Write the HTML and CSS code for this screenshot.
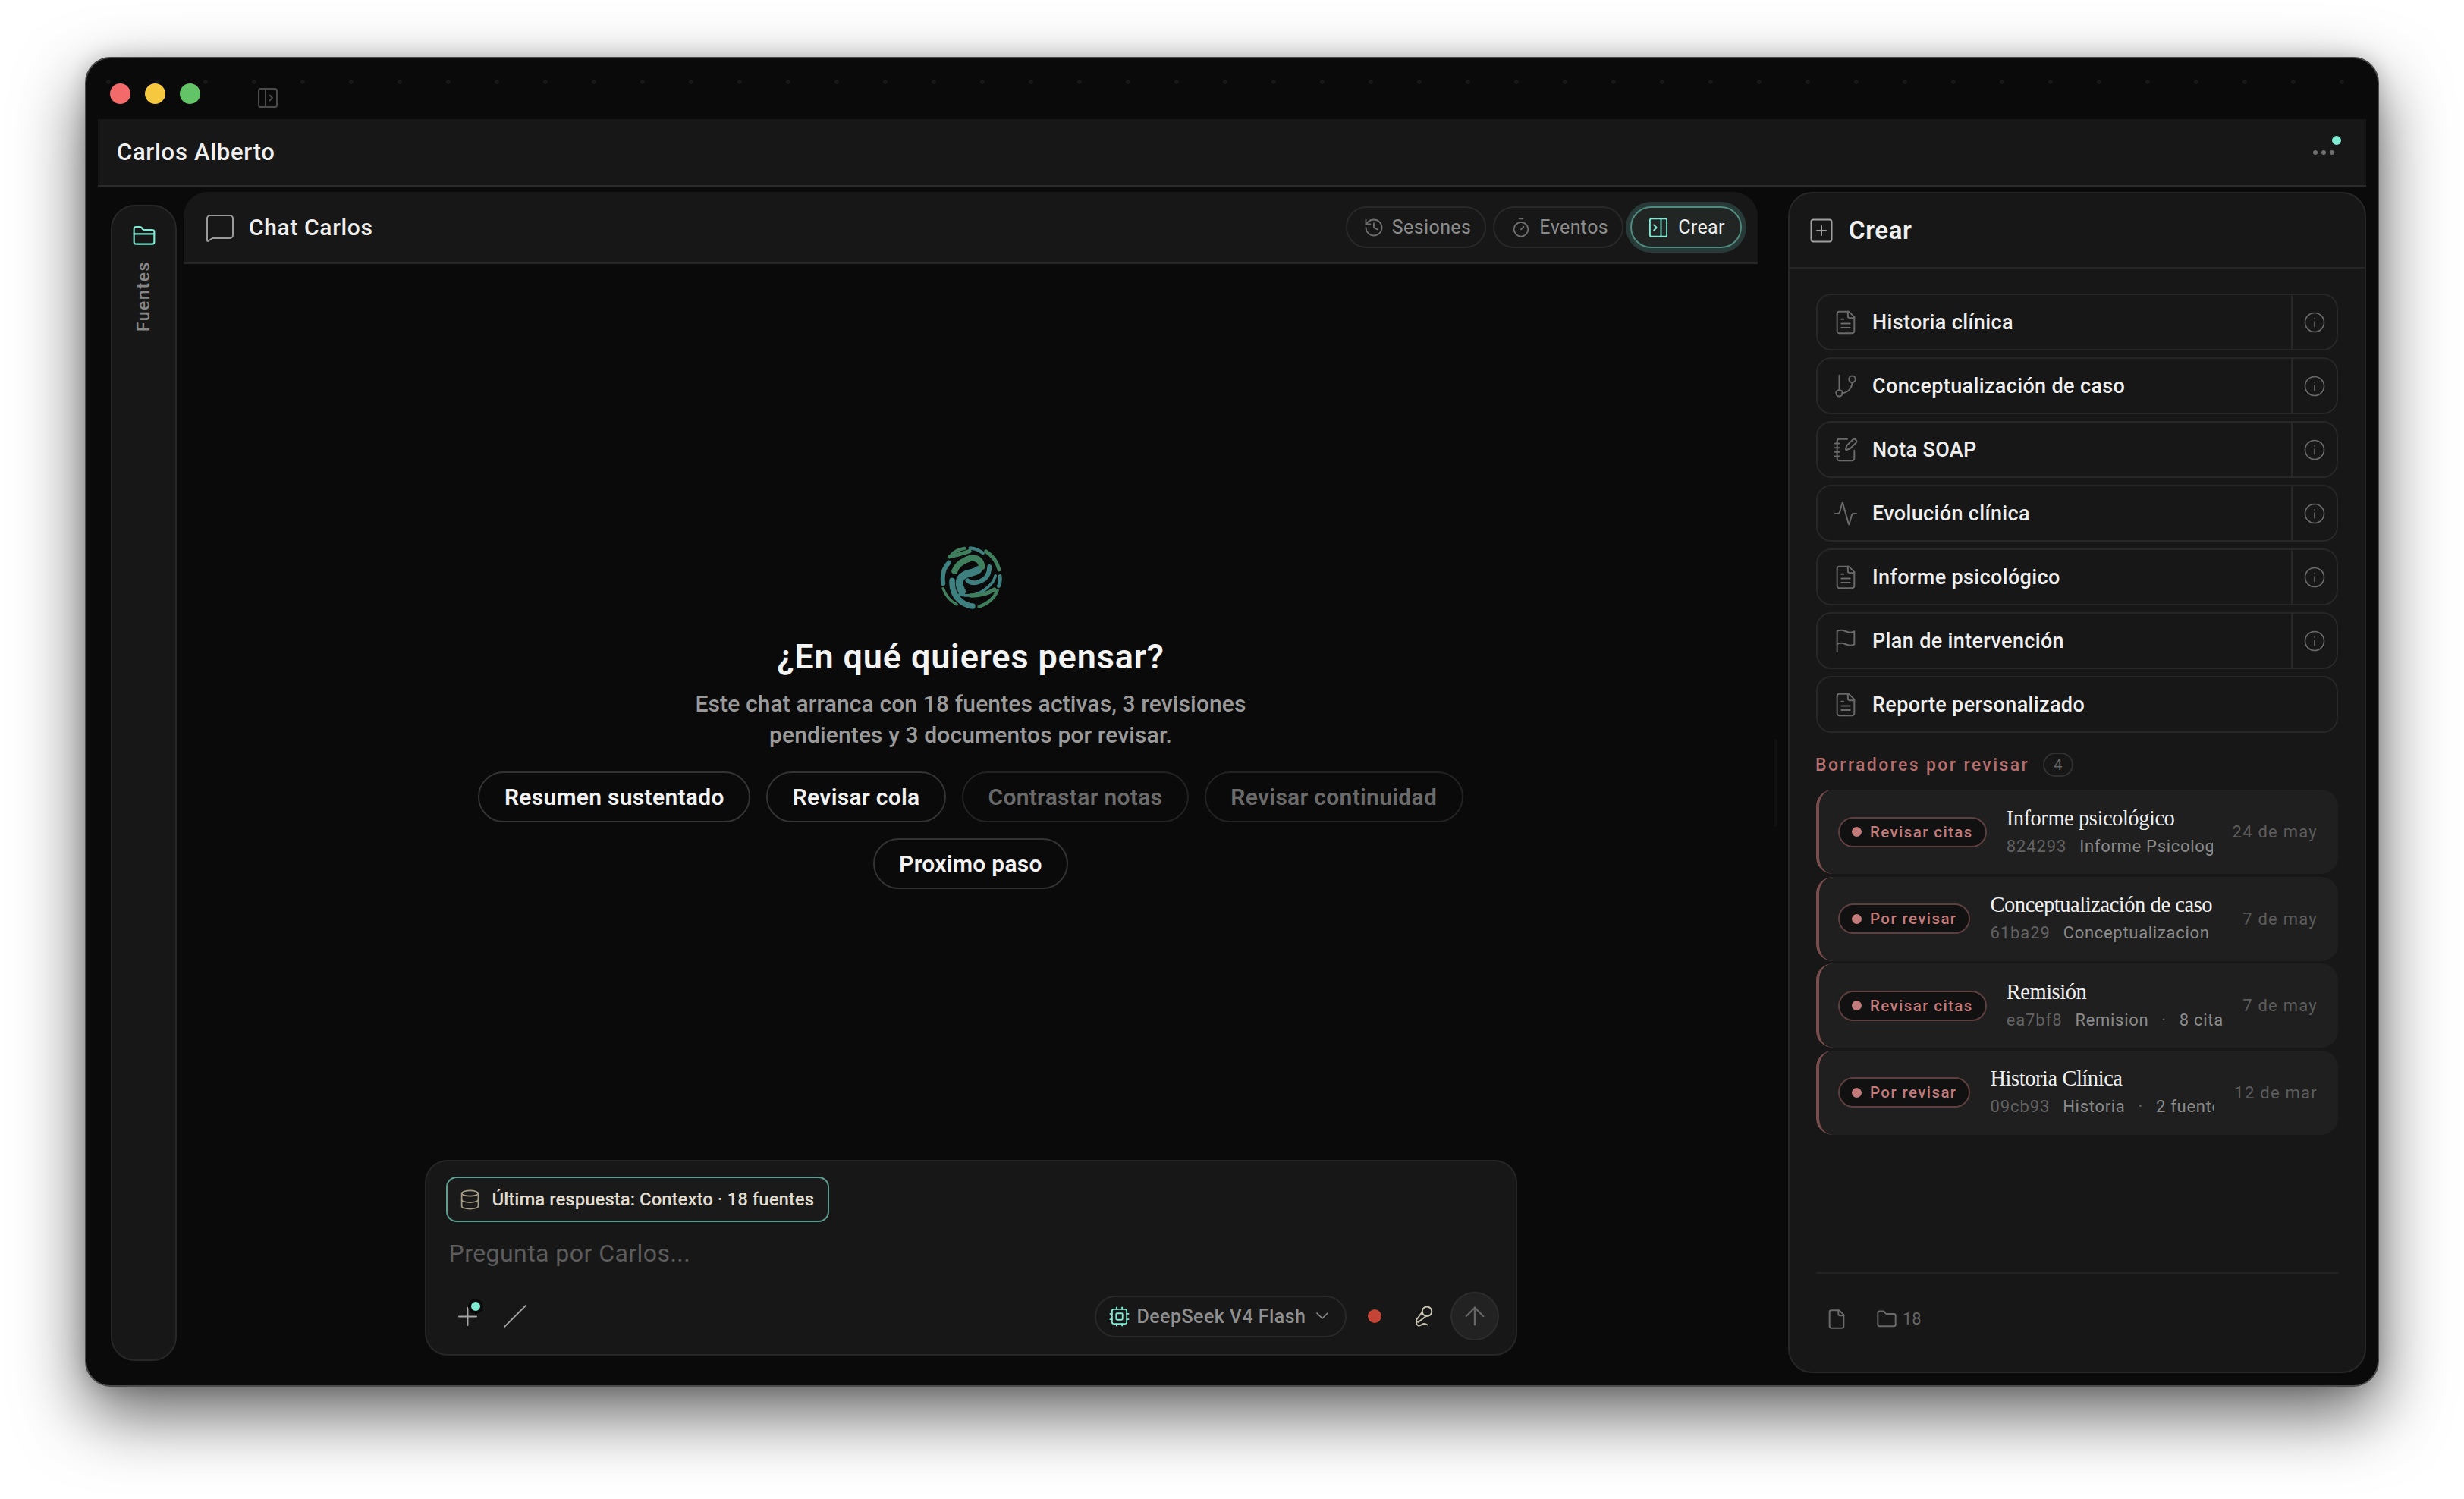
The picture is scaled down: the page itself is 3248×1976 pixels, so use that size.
FILE: index.html
```html
<!DOCTYPE html>
<html lang="es">
<head>
<meta charset="utf-8">
<title>Chat Carlos</title>
<link rel="stylesheet" href="styles.css">
</head>
<body>
<svg class="defs" width="0" height="0" aria-hidden="true">
  <defs>
    <symbol id="i-file-text" viewBox="0 0 24 24"><path d="M15 2H6a2 2 0 0 0-2 2v16a2 2 0 0 0 2 2h12a2 2 0 0 0 2-2V7Z"/><path d="M14 2v4a2 2 0 0 0 2 2h4"/><path d="M16 13H8"/><path d="M16 17H8"/><path d="M10 9H8"/></symbol>
    <symbol id="i-branch" viewBox="0 0 24 24"><path d="M6 2v13"/><circle cx="18" cy="5.500" r="3"/><circle cx="6" cy="18.500" r="3"/><path d="M18 8.500a10 10 0 0 1-9.500 10"/></symbol>
    <symbol id="i-note" viewBox="0 0 24 24"><path d="M13.400 2H6a2 2 0 0 0-2 2v16a2 2 0 0 0 2 2h12a2 2 0 0 0 2-2v-7.400"/><path d="M2 6h4"/><path d="M2 10h4"/><path d="M2 14h4"/><path d="M2 18h4"/><path d="M21.378 5.626a1 1 0 1 0-3.004-3.004l-5.010 5.012a2 2 0 0 0-.506.854l-.837 2.870a.5.5 0 0 0 .62.62l2.870-.837a2 2 0 0 0 .854-.506z"/></symbol>
    <symbol id="i-activity" viewBox="0 0 24 24"><path d="M22 12h-2.480a2 2 0 0 0-1.930 1.460l-2.350 8.360a.25.25 0 0 1-.48 0L9.240 2.180a.25.25 0 0 0-.48 0l-2.350 8.360A2 2 0 0 1 4.490 12H2"/></symbol>
    <symbol id="i-flag" viewBox="0 0 24 24"><path d="M4 15s1-1 4-1 5 2 8 2 4-1 4-1V3s-1 1-4 1-5-2-8-2-4 1-4 1z"/><path d="M4 22v-7"/></symbol>
    <symbol id="i-info" viewBox="0 0 24 24"><circle cx="12" cy="12" r="10"/><path d="M12 16.500v-5"/><path d="M12 7.800v.1"/></symbol>
  </defs>
</svg>

<div class="window">
  <div class="titlebar">
    <span class="light light-red"></span>
    <span class="light light-yellow"></span>
    <span class="light light-green"></span>
    <svg class="sidebar-toggle" viewBox="0 0 26 26"><rect x="1" y="1" width="24" height="24" rx="2.500"/><path d="M10 1v24"/><path d="M15.500 9.500l3.500 3.500-3.500 3.500"/></svg>
  </div>

  <header class="top-header">
    <span class="person">Carlos Alberto</span>
    <span class="more">
      <i></i><i></i><i></i>
      <b class="more-dot"></b>
    </span>
  </header>

  <div class="workspace">
    <aside class="rail">
      <svg class="rail-icon" viewBox="0 0 24 24"><path d="M20 20a2 2 0 0 0 2-2V8a2 2 0 0 0-2-2h-7.900a2 2 0 0 1-1.690-.9L9.600 3.900A2 2 0 0 0 7.930 3H4a2 2 0 0 0-2 2v13a2 2 0 0 0 2 2Z"/><path d="M2 10h20"/></svg>
      <span class="rail-label">Fuentes</span>
    </aside>

    <main class="chat">
      <div class="chat-head">
        <svg class="chat-icon" viewBox="0 0 36 36"><path d="M5 1h26a4 4 0 0 1 4 4v22a4 4 0 0 1-4 4H8l-6 4a1 1 0 0 1-1-1V5a4 4 0 0 1 4-4z"/></svg>
        <span class="chat-title">Chat Carlos</span>
        <div class="head-actions">
          <button class="head-btn">
            <svg viewBox="0 0 24 24"><path d="M3 12a9 9 0 1 0 9-9 9.750 9.750 0 0 0-6.740 2.740L3 8"/><path d="M3 3v5h5"/><path d="M12 7v5l4 2"/></svg>
            <span>Sesiones</span>
          </button>
          <button class="head-btn">
            <svg viewBox="0 0 24 24"><path d="M10 2h4"/><path d="M12 14l3-3"/><circle cx="12" cy="14" r="8"/></svg>
            <span>Eventos</span>
          </button>
          <button class="head-btn head-btn-active">
            <svg viewBox="0 0 24 24"><rect x="2.500" y="2" width="19" height="20" rx="1.500"/><path d="M15 2v20"/><path d="M7 9l3 3-3 3"/></svg>
            <span>Crear</span>
          </button>
        </div>
      </div>

      <div class="chat-body">
        <svg class="logo" viewBox="170 88 256 256">
          <g class="logo-t">
            <path stroke-width="13" d="M294 95Q325 98 346 116"/>
            <path stroke-width="15" d="M414 208Q417 230 409 248"/>
            <path stroke-width="23" d="M222 226Q220 285 262 313Q285 328 304 329"/>
            <path stroke-width="18" d="M209 154Q178 185 186 238"/>
            <path stroke-width="30" d="M262 270Q232 215 285 198Q318 192 328 182"/>
            <path stroke-width="18" d="M372 170Q372 222 320 234Q298 238 284 226"/>
            <path stroke-width="11" d="M252 282Q330 300 385 232Q393 218 396 206"/>
          </g>
          <g class="logo-g">
            <path stroke-width="15" d="M358 109Q398 135 411 182"/>
            <path stroke-width="13" d="M404 266Q385 312 330 331"/>
            <path stroke-width="11" d="M186 258Q200 300 240 322"/>
            <path stroke-width="13" d="M272 97Q240 102 220 122"/>
            <path stroke-width="25" d="M232 188Q245 152 296 136Q336 132 342 170"/>
            <path stroke-width="16" d="M296 286Q350 288 392 262"/>
            <path stroke-width="16" d="M212 130Q250 122 292 108"/>
          </g>
        </svg>
        <h1 class="hero-title">¿En qué quieres pensar?</h1>
        <p class="hero-sub">Este chat arranca con 18 fuentes activas, 3 revisiones<br>pendientes y 3 documentos por revisar.</p>
        <div class="chips">
          <button class="chip">Resumen sustentado</button>
          <button class="chip">Revisar cola</button>
          <button class="chip chip-off">Contrastar notas</button>
          <button class="chip chip-off">Revisar continuidad</button>
          <button class="chip">Proximo paso</button>
        </div>

        <div class="composer">
          <div class="context">
            <svg viewBox="0 0 24 24"><ellipse cx="12" cy="5" rx="9" ry="3"/><path d="M3 5v14a9 3 0 0 0 18 0V5"/><path d="M3 12a9 3 0 0 0 18 0"/></svg>
            <span>Última respuesta: Contexto · 18 fuentes</span>
          </div>
          <div class="placeholder">Pregunta por Carlos...</div>
          <div class="tools">
            <span class="tool-plus">
              <svg viewBox="0 0 26 26"><path d="M13 1v24"/><path d="M1 13h24"/></svg>
              <b class="tool-plus-dot"></b>
            </span>
            <svg class="tool-slash" viewBox="0 0 30 30"><path d="M1 29L29 1"/></svg>
            <span class="model">
              <svg class="model-chip" viewBox="0 0 24 24"><rect x="4" y="4" width="16" height="16" rx="2"/><rect x="8.500" y="8.500" width="7" height="7" rx="1"/><path d="M15 2v2"/><path d="M15 20v2"/><path d="M2 15h2"/><path d="M2 9h2"/><path d="M20 15h2"/><path d="M20 9h2"/><path d="M9 2v2"/><path d="M9 20v2"/></svg>
              <span>DeepSeek V4 Flash</span>
              <svg class="model-chev" viewBox="0 0 24 24"><path d="M5 8l7 7 7-7"/></svg>
            </span>
            <span class="rec"></span>
            <svg class="mic" viewBox="0 0 24 24"><path d="M11 7.600l-5.990 8.190a1 1 0 0 0 .1 1.300l.82.820a1 1 0 0 0 1.310.09L15.090 12"/><path d="M16.500 21.170C15.500 20.500 14.370 20 13 20c-2.060 0-3.930 2.360-6 2-2.070-.36-2.780-3.370-1.500-4.500"/><circle cx="16" cy="7" r="5"/></svg>
            <span class="send"><svg viewBox="0 0 24 24"><path d="M12 21V3"/><path d="M3 12l9-9 9 9"/></svg></span>
          </div>
        </div>
      </div>
    </main>

    <div class="resizer"><span></span></div>

    <aside class="create">
      <div class="create-head">
        <svg viewBox="0 0 32 32"><rect x="2.500" y="1.500" width="27" height="29" rx="3"/><path d="M16 10v12"/><path d="M10 16h12"/></svg>
        <span>Crear</span>
      </div>
      <div class="create-body">
        <div class="rows">
          <div class="row"><div class="row-main"><svg class="row-icon"><use href="#i-file-text"/></svg><span>Historia clínica</span></div><div class="row-info"><svg><use href="#i-info"/></svg></div></div>
          <div class="row"><div class="row-main"><svg class="row-icon"><use href="#i-branch"/></svg><span>Conceptualización de caso</span></div><div class="row-info"><svg><use href="#i-info"/></svg></div></div>
          <div class="row"><div class="row-main"><svg class="row-icon"><use href="#i-note"/></svg><span>Nota SOAP</span></div><div class="row-info"><svg><use href="#i-info"/></svg></div></div>
          <div class="row"><div class="row-main"><svg class="row-icon"><use href="#i-activity"/></svg><span>Evolución clínica</span></div><div class="row-info"><svg><use href="#i-info"/></svg></div></div>
          <div class="row"><div class="row-main"><svg class="row-icon"><use href="#i-file-text"/></svg><span>Informe psicológico</span></div><div class="row-info"><svg><use href="#i-info"/></svg></div></div>
          <div class="row"><div class="row-main"><svg class="row-icon"><use href="#i-flag"/></svg><span>Plan de intervención</span></div><div class="row-info"><svg><use href="#i-info"/></svg></div></div>
          <div class="row"><div class="row-main"><svg class="row-icon"><use href="#i-file-text"/></svg><span>Reporte personalizado</span></div></div>
        </div>

        <div class="drafts-label"><span>Borradores por revisar</span><b>4</b></div>

        <div class="cards">
          <article class="card">
            <span class="pill"><i></i>Revisar citas</span>
            <div class="card-text">
              <div class="card-title">Informe psicológico</div>
              <div class="card-meta"><span class="hash">824293</span><span>Informe Psicologico</span></div>
            </div>
            <time>24 de may</time>
          </article>
          <article class="card">
            <span class="pill"><i></i>Por revisar</span>
            <div class="card-text">
              <div class="card-title">Conceptualización de caso</div>
              <div class="card-meta"><span class="hash">61ba29</span><span>Conceptualizacion</span></div>
            </div>
            <time>7 de may</time>
          </article>
          <article class="card">
            <span class="pill"><i></i>Revisar citas</span>
            <div class="card-text">
              <div class="card-title">Remisión</div>
              <div class="card-meta"><span class="hash">ea7bf8</span><span>Remision</span><em>·</em><span>8 citas</span></div>
            </div>
            <time>7 de may</time>
          </article>
          <article class="card">
            <span class="pill"><i></i>Por revisar</span>
            <div class="card-text">
              <div class="card-title">Historia Clínica</div>
              <div class="card-meta"><span class="hash">09cb93</span><span>Historia</span><em>·</em><span>2 fuentes</span></div>
            </div>
            <time>12 de mar</time>
          </article>
        </div>

        <div class="create-foot">
          <svg class="foot-file" viewBox="0 0 24 24"><path d="M15 2H6a2 2 0 0 0-2 2v16a2 2 0 0 0 2 2h12a2 2 0 0 0 2-2V7Z"/><path d="M14 2v4a2 2 0 0 0 2 2h4"/></svg>
          <svg class="foot-folder" viewBox="0 0 24 24"><path d="M20 20a2 2 0 0 0 2-2V8a2 2 0 0 0-2-2h-7.900a2 2 0 0 1-1.690-.9L9.600 3.900A2 2 0 0 0 7.930 3H4a2 2 0 0 0-2 2v13a2 2 0 0 0 2 2Z"/></svg>
          <span>18</span>
        </div>
      </div>
    </aside>
  </div>
</div>
</body>
</html>
```

FILE: styles.css
```css
* { box-sizing: border-box; }
html, body { margin: 0; height: 100%; }
body {
  background: #fff;
  font-family: Roboto, "Liberation Sans", sans-serif;
  padding: 75px 112px 148px;
  overflow: hidden;
}
.defs { position: absolute; }
svg { display: block; fill: none; stroke: currentColor; stroke-linecap: round; stroke-linejoin: round; flex: none; }
button { font: inherit; background: none; padding: 0; }

.window {
  width: 3024px;
  height: 1753px;
  background: #0a0a0a;
  border: 2px solid #4a4a4a;
  border-radius: 34px;
  box-shadow: 0 36px 90px rgba(0,0,0,.62), 0 0 26px rgba(0,0,0,.18);
  display: flex;
  flex-direction: column;
  overflow: hidden;
}

/* title bar */
.titlebar {
  height: 80px;
  flex: none;
  display: flex;
  align-items: flex-start;
  padding: 33px 0 0 31px;
  gap: 19px;
  background-image: radial-gradient(circle, #181818 2.500px, transparent 3px);
  background-size: 64px 64px;
  background-position: -3px -1px;
  background-repeat: repeat-x;
}
.light { width: 27px; height: 27px; border-radius: 50%; }
.light-red { background: #f26a6a; }
.light-yellow { background: #f5c840; }
.light-green { background: #62c466; }
.sidebar-toggle { width: 26px; height: 26px; margin: 6px 0 0 57px; color: #4a4a4a; stroke-width: 2; }

/* person header */
.top-header {
  height: 89px;
  flex: none;
  margin: 0 15px;
  padding: 0 25px;
  display: flex;
  align-items: center;
  justify-content: space-between;
  background: #171717;
  border-bottom: 2px solid #2b2b2b;
}
.person { font-size: 31px; font-weight: 500; color: #f0f0f0; letter-spacing: .7px; margin-top: -1px; }
.more { position: relative; display: flex; gap: 5px; margin: 0 17px 0 0; }
.more i { width: 6px; height: 6px; border-radius: 50%; background: #6e6e6e; }
.more-dot { position: absolute; right: -9px; top: -19px; width: 12px; height: 12px; border-radius: 50%; background: #80ead2; }

/* workspace */
.workspace { flex: 1; min-height: 0; display: flex; padding-top: 7px; }
.rail {
  width: 87px;
  flex: none;
  margin: 17px 9px 32px 32px;
  background: #171717;
  border: 2px solid #272727;
  border-radius: 32px;
  display: flex;
  flex-direction: column;
  align-items: center;
  padding-top: 23px;
}
.rail-icon { width: 32px; height: 32px; color: #80ead2; stroke-width: 1.600; }
.rail-label {
  writing-mode: vertical-rl;
  transform: rotate(180deg);
  margin-top: 17px;
  font-size: 23px;
  font-weight: 500;
  letter-spacing: 1.600px;
  color: #868686;
}

/* chat */
.chat { width: 2075px; flex: none; display: flex; flex-direction: column; }
.chat-head {
  height: 95px;
  flex: none;
  background: #171717;
  border-bottom: 2px solid #262626;
  border-radius: 32px 32px 0 0;
  display: flex;
  align-items: center;
  padding: 0 21px 0 30px;
}
.chat-icon { width: 36px; height: 36px; color: #9a9a9a; stroke-width: 2; margin-top: 2px; }
.chat-title { margin-left: 20px; font-size: 30px; font-weight: 500; color: #eee; letter-spacing: .65px; }
.head-actions { margin-left: auto; display: flex; align-items: center; gap: 9px; }
.head-btn {
  height: 55px;
  border: 2px solid #282828;
  border-radius: 28px;
  display: flex;
  align-items: center;
  gap: 10px;
  padding: 0 18px 0 21px;
  font-size: 25px;
  color: #8c8c8c;
  letter-spacing: .4px;
}
.head-btn svg { width: 28px; height: 28px; stroke-width: 1.600; color: #6e6e6e; }
.head-btn-active {
  background: #212625;
  border-color: #4f8b7f;
  box-shadow: 0 0 0 6px #283a37;
  color: #eee;
  gap: 12px;
  padding-right: 20px;
}
.head-btn-active svg { color: #80ead2; }

.chat-body { flex: 1; min-height: 0; display: flex; flex-direction: column; align-items: center; padding: 372px 0 39px; }
.logo { width: 84px; height: 84px; }
.logo-t { stroke: #3e7f80; }
.logo-g { stroke: #3f7f5e; }
.hero-title { margin: 34px 0 0; font-size: 45px; line-height: 56px; font-weight: 600; color: #f4f4f4; letter-spacing: .85px; }
.hero-sub { margin: 13px 0 0; font-size: 30px; line-height: 41px; font-weight: 500; color: #9a9a9a; text-align: center; letter-spacing: .12px; }
.chips { width: 1320px; margin-top: 28px; display: flex; flex-wrap: wrap; justify-content: center; gap: 21px; }
.chip {
  height: 67px;
  padding: 0 32.500px;
  border: 2px solid #333;
  border-radius: 34px;
  font-size: 30px;
  font-weight: 600;
  color: #f2f2f2;
  letter-spacing: .3px;
}
.chip-off { color: #6a6a6a; border-color: #222; }

/* composer */
.composer {
  width: 1440px;
  height: 258px;
  margin-top: auto;
  flex: none;
  background: #171717;
  border: 2px solid #262626;
  border-radius: 30px;
  padding: 20px 22px 18px 26px;
}
.context {
  width: 505px;
  height: 60px;
  border: 2px solid #5f9c90;
  border-radius: 14px;
  background: #1a1a1a;
  display: flex;
  align-items: center;
  gap: 15px;
  padding-left: 15px;
  font-size: 24px;
  font-weight: 500;
  color: #e0dccf;
  white-space: nowrap;
}
.context svg { width: 29px; height: 29px; color: #a59b85; stroke-width: 1.400; }
.placeholder { margin: 19px 0 0 4px; font-size: 32px; line-height: 44px; color: #5c5c5c; letter-spacing: .45px; }
.tools { margin-top: 29px; height: 64px; display: flex; align-items: center; }
.tool-plus { position: relative; margin: 0 0 0 16px; }
.tool-plus svg { width: 25px; height: 25px; color: #a6a6a6; stroke-width: 2; }
.tool-plus-dot {
  position: absolute; right: -8px; top: -11px;
  width: 20px; height: 20px; border-radius: 50%;
  background: #80ead2; border: 4px solid #0a0a0a;
}
.tool-slash { width: 30px; height: 30px; margin-left: 35px; color: #a0a0a0; stroke-width: 1.800; }
.model {
  margin-left: auto;
  height: 55px;
  width: 332px;
  border: 2px solid #282828;
  border-radius: 28px;
  display: flex;
  align-items: center;
  padding-left: 16px;
  font-size: 25px;
  font-weight: 500;
  color: #8f8f8f;
  letter-spacing: .45px;
  white-space: nowrap;
}
.model-chip { width: 29px; height: 29px; color: #80ead2; stroke-width: 1.500; margin-right: 9px; }
.model-chev { width: 24px; height: 24px; color: #8a8a8a; stroke-width: 1.700; margin-left: 10px; }
.rec { width: 18px; height: 18px; margin-left: 28px; border-radius: 50%; background: #c44536; }
.mic { width: 30px; height: 30px; margin-left: 40px; color: #c8c2b0; stroke-width: 1.600; }
.send {
  width: 64px; height: 64px; margin-left: 21px;
  border-radius: 50%;
  background: #222;
  border: 2px solid #2c2c2c;
  display: flex; align-items: center; justify-content: center;
  color: #666;
}
.send svg { width: 30px; height: 30px; stroke-width: 1.900; }

/* resizer */
.resizer { width: 40px; flex: none; display: flex; align-items: center; justify-content: center; padding: 0 0 15px 5px; }
.resizer span { width: 4px; height: 116px; border-radius: 2px; background: #111; }

/* create panel */
.create {
  flex: 1;
  margin: 0 15px 16px 0;
  min-width: 0;
  background: #171717;
  border: 2px solid #272727;
  border-radius: 32px;
  display: flex;
  flex-direction: column;
}
.create-head {
  height: 99px;
  flex: none;
  border-bottom: 2px solid #262626;
  display: flex;
  align-items: center;
  gap: 20px;
  padding-left: 26px;
  font-size: 33px;
  font-weight: 600;
  letter-spacing: .6px;
  color: #efefef;
}
.create-head svg { width: 32px; height: 32px; color: #a0a0a0; stroke-width: 2; }
.create-body { flex: 1; min-height: 0; display: flex; flex-direction: column; padding: 33px 35px 0; }
.rows { display: flex; flex-direction: column; gap: 9px; }
.row { height: 75px; border: 2px solid #272727; border-radius: 20px; display: flex; }
.row-main {
  flex: 1; min-width: 0;
  display: flex; align-items: center; gap: 18px;
  padding-left: 20px;
  font-size: 27px;
  font-weight: 500;
  color: #efefef;
  letter-spacing: .35px;
}
.row-icon { width: 34px; height: 34px; color: #6a6a6a; stroke-width: 1.400; }
.row-info { width: 60px; flex: none; border-left: 2px solid #272727; display: flex; align-items: center; justify-content: center; }
.row-info svg { width: 30px; height: 30px; color: #6a6a6a; stroke-width: 1.300; }

.drafts-label { margin-top: 26px; height: 32px; display: flex; align-items: center; gap: 18px; }
.drafts-label span { font-size: 23px; font-weight: 500; letter-spacing: 2.400px; color: #b56d6d; margin-left: -1px; }
.drafts-label b { width: 40px; height: 32px; border: 2px solid #303030; border-radius: 16px; display: flex; align-items: center; justify-content: center; font-size: 20px; font-weight: 400; color: #666; }

.cards { margin-top: 17px; display: flex; flex-direction: column; gap: 3.500px; }
.card {
  height: 111px;
  background: #1f1f1f;
  border-left: 4px solid #7a4e4e;
  border-radius: 22px;
  display: flex;
  align-items: center;
  padding: 0 27px 0 25px;
  gap: 26px;
}
.pill {
  flex: none;
  height: 40px;
  display: flex;
  align-items: center;
  gap: 11px;
  padding: 0 16px;
  background: #111;
  border: 2px solid #5e3f3f;
  border-radius: 20px;
  font-size: 20.500px;
  font-weight: 500;
  letter-spacing: 1.400px;
  color: #c27a7a;
}
.pill i { width: 13px; height: 13px; border-radius: 50%; background: #c27a7a; }
.card-text { flex: 1; min-width: 0; overflow: hidden; white-space: nowrap; }
.card-title { font-family: "Liberation Serif", serif; font-size: 28.500px; line-height: 37px; color: #eee; letter-spacing: -.45px; }
.card-meta { display: flex; gap: 17px; font-size: 22px; line-height: 37px; color: #8a8a8a; letter-spacing: .7px; }
.card-meta .hash { color: #626262; letter-spacing: .9px; }
.card-meta em { font-style: normal; color: #666; }
.card time { flex: none; font-size: 22px; letter-spacing: 1.250px; color: #5c5c5c; }

.create-foot {
  margin-top: auto;
  height: 131px;
  flex: none;
  border-top: 2px solid #232323;
  display: flex;
  align-items: flex-start;
  padding: 46px 0 0 13px;
  font-size: 22px;
  color: #666;
}
.create-foot svg { color: #6a6a6a; stroke-width: 1.700; width: 28px; height: 28px; }
.foot-folder { margin: 0 7px 0 38px; }
.create-foot span { line-height: 28px; }
```
